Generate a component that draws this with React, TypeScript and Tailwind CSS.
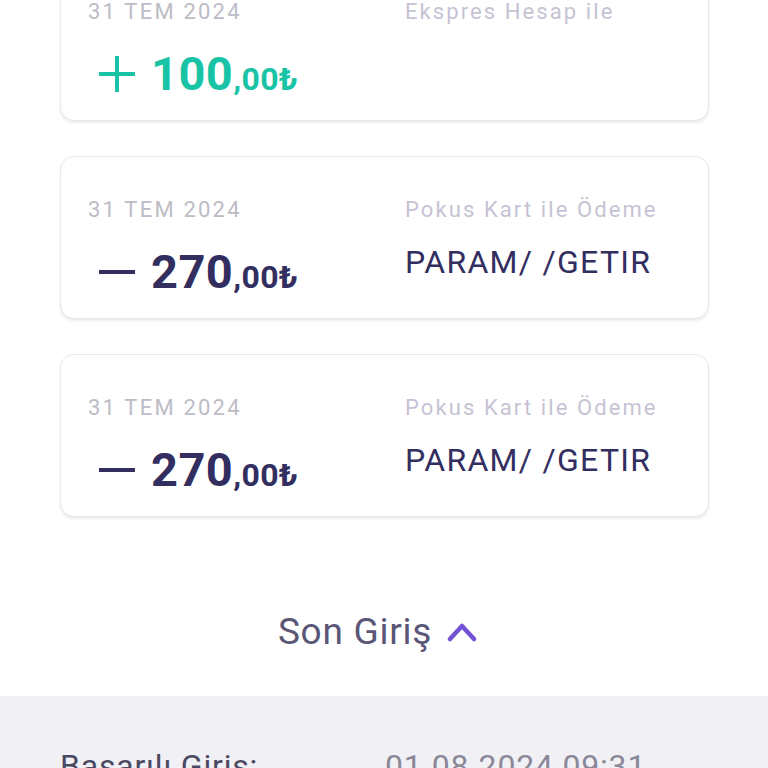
import React from "react";

type Tx = {
  date: string;
  label: string;
  sign: "+" | "-";
  whole: string;
  cents: string;
  merchant?: string;
};

const transactions: Tx[] = [
  { date: "31 TEM 2024", label: "Ekspres Hesap ile", sign: "+", whole: "100", cents: ",00₺" },
  { date: "31 TEM 2024", label: "Pokus Kart ile Ödeme", sign: "-", whole: "270", cents: ",00₺", merchant: "PARAM/ /GETIR" },
  { date: "31 TEM 2024", label: "Pokus Kart ile Ödeme", sign: "-", whole: "270", cents: ",00₺", merchant: "PARAM/ /GETIR" },
];

const SignIcon = ({ sign }: { sign: "+" | "-" }) => (
  <svg width="38" height="38" viewBox="0 0 38 38" className="shrink-0">
    <line x1="1" y1="19" x2="37" y2="19" stroke="currentColor" strokeWidth="4" />
    {sign === "+" && <line x1="19" y1="1" x2="19" y2="37" stroke="currentColor" strokeWidth="4" />}
  </svg>
);

const TxCard = ({ tx }: { tx: Tx }) => {
  const color = tx.sign === "+" ? "text-[#19c4a6]" : "text-[#332e60]";
  return (
    <div className="h-[163px] rounded-[14px] border-[1.5px] border-[#e7e7ec] bg-white shadow-[0_2px_3px_rgba(0,0,0,0.08)] pl-[27px] pt-[39px]">
      <div className="grid grid-cols-[317px_1fr]">
        <div>
          <div className="h-[28px] text-[22px] leading-[28px] tracking-[0.1em] text-[#bdbcc6]">{tx.date}</div>
          <div className={`mt-[24px] flex items-center pl-[10px] ${color}`}>
            <SignIcon sign={tx.sign} />
            <div className="ml-[15px] flex items-baseline font-bold">
              <span className="text-[47px] leading-[48px] tracking-[0.01em]">{tx.whole}</span>
              <span className="text-[32px] leading-[32px] tracking-[0.01em]">{tx.cents}</span>
            </div>
          </div>
        </div>
        <div>
          <div className="h-[28px] text-[22px] leading-[28px] tracking-[0.095em] text-[#c6c3d4]">{tx.label}</div>
          {tx.merchant && (
            <div className="mt-[18px] text-[32px] leading-[40px] tracking-[0.04em] text-[#332e60]">{tx.merchant}</div>
          )}
        </div>
      </div>
    </div>
  );
};

export default function App() {
  return (
    <div className="h-[768px] w-[768px] overflow-hidden bg-white font-['Roboto',sans-serif]">
      <div className="-mt-[42px] flex flex-col gap-[35px] pl-[60px] pr-[59px]">
        {transactions.map((tx, i) => (
          <TxCard key={i} tx={tx} />
        ))}
      </div>

      <div className="flex items-center justify-center gap-[15px] pt-[91px] pb-[40px] pr-[13px]">
        <span className="text-[37px] leading-[48px] tracking-[0.02em] text-[#5a5677]">Son Giriş</span>
        <svg width="30" height="22" viewBox="0 0 30 22">
          <polyline points="3,18 15,5 27,18" fill="none" stroke="#7452d4" strokeWidth="4.5" strokeLinecap="round" strokeLinejoin="round" />
        </svg>
      </div>

      <div className="h-[200px] bg-[#f1f1f5] pl-[60px] pt-[50px]">
        <div className="grid grid-cols-[325px_1fr] text-[32px] leading-[40px] tracking-[0.025em]">
          <span className="text-[#4b4862]">Başarılı Giriş:</span>
          <span className="text-[#8a8898]">01.08.2024 09:31</span>
        </div>
      </div>
    </div>
  );
}
